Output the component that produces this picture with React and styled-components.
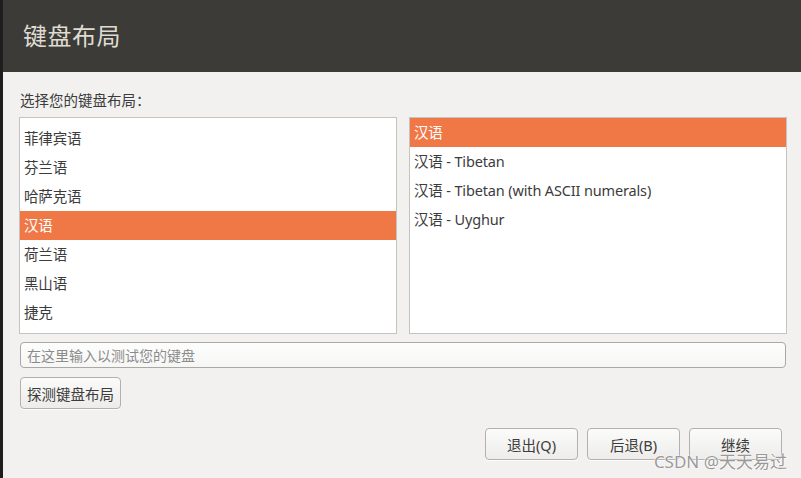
import React from 'react';
import styled, { createGlobalStyle } from 'styled-components';

const GlobalStyle = createGlobalStyle`
    html, body {
        margin: 0;
        padding: 0;
        background: #f2f1f0;
    }
    body {
        font-family: "Noto Sans", "Noto Sans CJK SC", sans-serif;
    }
`;

const layouts = ['法语', '菲律宾语', '芬兰语', '哈萨克语', '汉语', '荷兰语', '黑山语', '捷克', '克罗地亚语'];
const variants = ['汉语', '汉语 - Tibetan', '汉语 - Tibetan (with ASCII numerals)', '汉语 - Uyghur'];

const App = () => {
    return (
        <Window className='Window'>
            <GlobalStyle />
            <Header>
                <h1>键盘布局</h1>
            </Header>
            <Main>
                <Label>选择您的键盘布局：</Label>
                <Lists>
                    <ListBox>
                        <ListInner $offset={23}>
                            {layouts.map((l) => (
                                <Row key={l} $active={l === '汉语'}>{l}</Row>
                            ))}
                        </ListInner>
                    </ListBox>
                    <ListBox>
                        <ListInner $offset={0}>
                            {variants.map((v, i) => (
                                <Row key={v} $active={i === 0}>{v}</Row>
                            ))}
                        </ListInner>
                    </ListBox>
                </Lists>
                <TestInput placeholder="在这里输入以测试您的键盘" />
                <DetectRow>
                    <Button $w={101}>探测键盘布局</Button>
                </DetectRow>
                <Footer>
                    <Button $w={93}>退出(Q)</Button>
                    <Button $w={93}>后退(B)</Button>
                    <Button $w={93}>继续</Button>
                </Footer>
            </Main>
            <Watermark>CSDN @天天易过</Watermark>
        </Window>
    );
};

export default App;

const Window = styled.div`
    position: relative;
    display: flex;
    flex-direction: column;
    width: 801px;
    height: 478px;
    box-sizing: border-box;
    border-left: 3px solid #1e1e1e;
    background: #f2f1f0;
    overflow: hidden;
`;

const Header = styled.div`
    height: 72px;
    flex: none;
    display: flex;
    align-items: center;
    padding: 0 0 4px 20px;
    box-sizing: border-box;
    background: #3c3b37;

    h1 {
        margin: 0;
        font-weight: normal;
        font-size: 24px;
        letter-spacing: 0.5px;
        color: #dfdbd2;
    }
`;

const Main = styled.div`
    display: flex;
    flex-direction: column;
    padding: 18px 14px 0 16px;
`;

const Label = styled.div`
    height: 20px;
    line-height: 20px;
    font-size: 14.5px;
    font-family: "Noto Sans CJK SC", sans-serif;
    color: #3c3c3c;
    margin-left: 1px;
    margin-bottom: 7px;
`;

const Lists = styled.div`
    display: grid;
    grid-template-columns: 378px 378px;
    gap: 12px;
`;

const ListBox = styled.div`
    height: 217px;
    box-sizing: border-box;
    border: 1px solid #c4c3c0;
    background: #ffffff;
    overflow: hidden;
`;

const ListInner = styled.div`
    margin-top: ${(p) => -p.$offset}px;
`;

const Row = styled.div`
    height: 29px;
    line-height: 29px;
    padding-left: 4px;
    font-size: 14.5px;
    letter-spacing: -0.15px;
    white-space: nowrap;
    color: ${(p) => (p.$active ? '#ffffff' : '#3c3c3c')};
    background: ${(p) => (p.$active ? '#f07746' : 'transparent')};
`;

const TestInput = styled.input`
    margin: 8px 1px 0 1px;
    height: 26px;
    box-sizing: border-box;
    border: 1px solid #a9a8a5;
    border-radius: 4px;
    background: linear-gradient(#fdfdfd, #f6f6f5);
    padding: 0 6px;
    font-family: inherit;
    font-size: 14px;
    color: #3c3c3c;
    outline: none;

    &::placeholder {
        color: #8b8b8b;
    }
`;

const DetectRow = styled.div`
    display: flex;
    margin: 9px 0 0 1px;
`;

const Button = styled.button`
    width: ${(p) => p.$w}px;
    height: 32px;
    box-sizing: border-box;
    padding: 0;
    border: 1px solid #b2b1ae;
    border-radius: 4px;
    background: linear-gradient(#fbfbfa, #edecea);
    font-family: inherit;
    font-size: 14.5px;
    color: #3c3c3c;
    box-shadow: 0 1px 0 rgba(255, 255, 255, 0.8);
`;

const Footer = styled.div`
    display: flex;
    justify-content: flex-end;
    gap: 9px;
    margin-top: 19px;
    padding-right: 5px;
`;

const Watermark = styled.div`
    position: absolute;
    right: 14px;
    bottom: 6px;
    font-size: 17px;
    line-height: 20px;
    color: rgba(125, 125, 125, 0.8);
    text-shadow: 0 0 2px #ffffff, 0 0 1px #ffffff;
    pointer-events: none;
`;
